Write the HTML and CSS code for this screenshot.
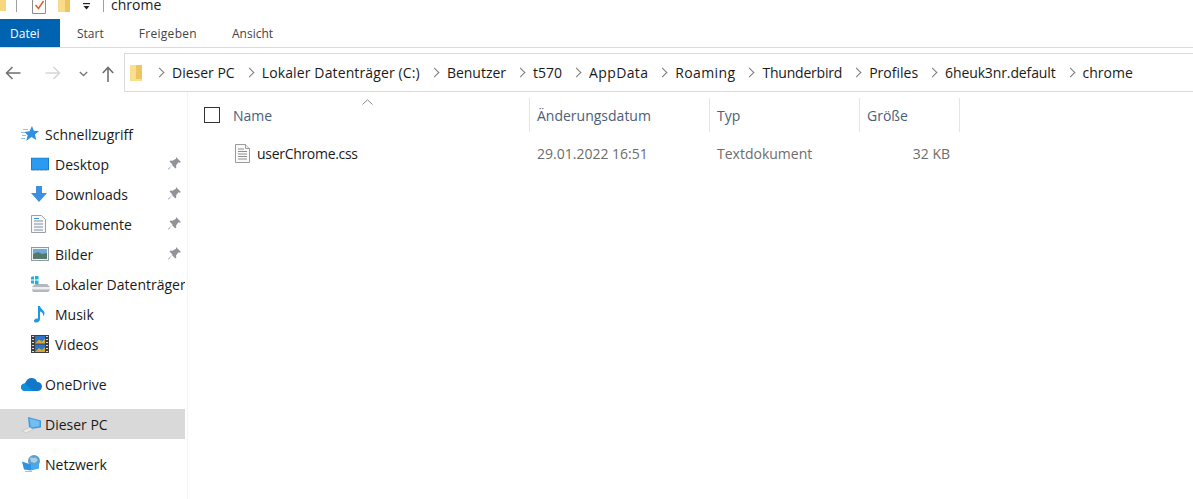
FILE: index.html
```html
<!DOCTYPE html>
<html lang="de">
<head>
<meta charset="utf-8">
<title>chrome</title>
<link rel="stylesheet" href="styles.css">
</head>
<body>
<div class="titlebar">
  <svg class="qa-folder-cut" width="6" height="11" viewBox="0 0 6 11"><rect width="6" height="11" fill="#f6d77e"/></svg>
  <span class="qa-sep"></span>
  <svg class="qa-check" width="15" height="15" viewBox="0 0 15 15"><path d="M.5 0v13.500h13V0" fill="#fff" stroke="#8d8d8d"/><path d="M3.500 5l3 3.500L11.500 1" fill="none" stroke="#d9622b" stroke-width="1.500"/></svg>
  <svg class="qa-folder" width="12" height="12" viewBox="0 0 12 12"><rect width="12" height="12" fill="#f8dc8a"/><rect x="7" width="5" height="12" fill="#eec45e"/></svg>
  <svg class="qa-drop" width="9" height="8" viewBox="0 0 9 8"><rect x="1" y="0" width="7" height="1.200" fill="#222"/><path d="M1.500 3h6L4.500 6.500z" fill="#222"/></svg>
  <span class="qa-sep qa-sep-b"></span>
  <span class="title">chrome</span>
</div>
<nav class="ribbon">
  <span class="tab tab-file">Datei</span>
  <span class="tab tab-start">Start</span>
  <span class="tab tab-share">Freigeben</span>
  <span class="tab tab-view">Ansicht</span>
</nav>
<div class="addressrow">
  <svg class="nav-back" width="16" height="14" viewBox="0 0 16 14"><path d="M15.500 7H1.500M7.500 1l-6 6 6 6" fill="none" stroke="#6f6f6f" stroke-width="1.500"/></svg>
  <svg class="nav-forward" width="16" height="14" viewBox="0 0 16 14"><path d="M.5 7h14M8.500 1l6 6-6 6" fill="none" stroke="#d6d6d6" stroke-width="1.500"/></svg>
  <svg class="nav-recent" width="9" height="6" viewBox="0 0 9 6"><path d="M.8 1l3.700 3.500L8.200 1" fill="none" stroke="#7c7c7c" stroke-width="1.500"/></svg>
  <svg class="nav-up" width="12" height="16" viewBox="0 0 12 16"><path d="M6 16V2M.8 7L6 1.500 11.200 7" fill="none" stroke="#6f6f6f" stroke-width="1.600"/></svg>
  <div class="addressbox">
    <svg class="crumb-folder" width="12" height="16" viewBox="0 0 12 16"><rect width="12" height="16" fill="#f9df90"/><rect x="6" width="6" height="14" fill="#eec560"/></svg>
    <ol class="crumbs">
      <li class="crumb">Dieser PC</li>
      <li class="crumb crumb-slight">Lokaler Datenträger (C:)</li>
      <li class="crumb">Benutzer</li>
      <li class="crumb">t570</li>
      <li class="crumb crumb-wide">AppData</li>
      <li class="crumb crumb-wide">Roaming</li>
      <li class="crumb crumb-narrow">Thunderbird</li>
      <li class="crumb">Profiles</li>
      <li class="crumb crumb-tight">6heuk3nr.default</li>
      <li class="crumb">chrome</li>
    </ol>
  </div>
</div>
<div class="main">
  <aside class="sidebar">
    <ul class="group">
      <li class="item top">
        <svg class="ico" width="18" height="16" viewBox="0 0 18 16"><path d="M11 0l1.800 4.700 5.200.3-4 3.400 1.300 5.600L10.500 11 5.200 15l1.500-5.800L3.500 6l5-.8z" fill="#2f8fe0"/><path d="M0 6.500h4M1 9.500h4M0 12.500h4M2 3.500h5" stroke="#8fc4ee"/></svg>
        <span>Schnellzugriff</span>
      </li>
      <li class="item child">
        <svg class="ico" width="18" height="13" viewBox="0 0 18 13"><rect x=".5" y=".5" width="17" height="12" fill="#2a9bf0" stroke="#1c7cc8"/><path d="M1 12.500h16" stroke="#5f7383" stroke-dasharray="3 1"/></svg>
        <span class="label">Desktop</span>
        <svg class="pin" width="13" height="13" viewBox="0 0 13 13"><path d="M8 0l5 5-1.500.8-1-.5L8 8.500l.3 2-1 1L4 8 .8 12.500 0 12l4.500-4.500-3-3 1-1 2 .3L8 1.800z" fill="#8e9499"/></svg>
      </li>
      <li class="item child">
        <svg class="ico" width="16" height="16" viewBox="0 0 16 16"><path d="M5 0h6v7h5l-8 9-8-9h5z" fill="#3d8fe0"/></svg>
        <span class="label">Downloads</span>
        <svg class="pin" width="13" height="13" viewBox="0 0 13 13"><path d="M8 0l5 5-1.500.8-1-.5L8 8.500l.3 2-1 1L4 8 .8 12.500 0 12l4.500-4.500-3-3 1-1 2 .3L8 1.800z" fill="#8e9499"/></svg>
      </li>
      <li class="item child">
        <svg class="ico" width="15" height="18" viewBox="0 0 15 18"><path d="M.5.500h10l4 4v13H.5z" fill="#f8f8f8" stroke="#9aa0a6"/><path d="M3 6h9M3 9h9M3 12h9M3 15h9" stroke="#7e8f9e"/><path d="M3 3.500h5" stroke="#3d8fe0"/></svg>
        <span class="label">Dokumente</span>
        <svg class="pin" width="13" height="13" viewBox="0 0 13 13"><path d="M8 0l5 5-1.500.8-1-.5L8 8.500l.3 2-1 1L4 8 .8 12.500 0 12l4.500-4.500-3-3 1-1 2 .3L8 1.800z" fill="#8e9499"/></svg>
      </li>
      <li class="item child">
        <svg class="ico" width="18" height="14" viewBox="0 0 18 14"><rect x=".5" y=".5" width="17" height="13" fill="#eef3f7" stroke="#8d9aa5"/><rect x="2" y="2" width="14" height="5" fill="#6fa9d8"/><path d="M2 7l5-2 4 2 5-1v6H2z" fill="#56786a"/></svg>
        <span class="label">Bilder</span>
        <svg class="pin" width="13" height="13" viewBox="0 0 13 13"><path d="M8 0l5 5-1.500.8-1-.5L8 8.500l.3 2-1 1L4 8 .8 12.500 0 12l4.500-4.500-3-3 1-1 2 .3L8 1.800z" fill="#8e9499"/></svg>
      </li>
      <li class="item child">
        <svg class="ico" width="19" height="16" viewBox="0 0 19 16"><path d="M1 11l3-3h12l3 3v3l-2 2H2l-1-2z" fill="#b4b8bc"/><path d="M1 11h18v2.500H1z" fill="#eceeef"/><path d="M0 1l3-.7v3.200H0zM4 .100L7.500 0v3.500H4zM0 4.500h3v3.200l-3-.5zM4 4.500h3.500v4L4 8z" fill="#16b4dc"/></svg>
        <span class="label">Lokaler Datenträger (C:)</span>
      </li>
      <li class="item child">
        <svg class="ico" width="18" height="18" viewBox="0 0 18 18"><path d="M7 1h2c.5 3 3.500 3.500 4.500 6.500 0 1.500-.5 3-1.500 3.500.5-2.500-1-4-3-4.500V14c0 2.500-2 3.500-4 3.500-1.500 0-2-1-2-1.800 0-1.500 1.800-2.700 4-2.200z" fill="#1a9ae0"/></svg>
        <span class="label">Musik</span>
      </li>
      <li class="item child">
        <svg class="ico" width="18" height="18" viewBox="0 0 18 18"><rect width="18" height="18" fill="#3b3f44"/><rect x="4" y="1" width="10" height="7.500" fill="#2f74c8"/><rect x="4" y="9.500" width="10" height="7.500" fill="#2f74c8"/><path d="M4 8.500l4-4 3 2 3-3v5zM4 17l4-4 3 2 3-3v5z" fill="#d9a62c"/><path d="M1 1.500h2M1 4.500h2M1 7.500h2M1 10.500h2M1 13.500h2M1 16.500h2M15 1.500h2M15 4.500h2M15 7.500h2M15 10.500h2M15 13.500h2M15 16.500h2" stroke="#d8dadc"/></svg>
        <span class="label">Videos</span>
      </li>
    </ul>
    <ul class="group">
      <li class="item top">
        <svg class="ico" width="21" height="14" viewBox="0 0 21 14"><path d="M4 14C1.500 14 0 12.300 0 10.300 0 8 1.800 6.500 4 6.500 5 3 7.500 1 10.500 1c2.800 0 4.800 1.500 5.700 4 2.800 0 4.800 2 4.800 4.500S19 14 16.500 14z" fill="#1478c8"/><path d="M4 14C1.500 14 0 12.300 0 10.300 0 8 1.800 6.500 4 6.500L12 14z" fill="#0f90dc"/></svg>
        <span>OneDrive</span>
      </li>
    </ul>
    <ul class="group">
      <li class="item top selected">
        <svg class="ico" width="20" height="18" viewBox="0 0 20 18"><path d="M7 2l13 3.500v7L10 14 8 12z" fill="#3d9ae2"/><path d="M8.500 3.500l10 2.700v5l-8 1.200-1-1.700z" fill="#74bdf0"/><path d="M1 15.500l8-3 3 2-7 3.500z" fill="#e9e9e9" stroke="#bdbdbd" stroke-width=".6"/></svg>
        <span>Dieser PC</span>
      </li>
    </ul>
    <ul class="group">
      <li class="item top">
        <svg class="ico" width="20" height="18" viewBox="0 0 20 18"><circle cx="13" cy="6" r="6" fill="#5d9fd0"/><path d="M9 2.500c2.500 0 3.500 1 5.500 0L17 5l-3 3-4-1z" fill="#a5d0ea"/><path d="M1 6.500l9 3v6l-7-1z" fill="#2f93e0"/><path d="M10 9.500l8-1v5l-8 2z" fill="#4aa8ee"/><path d="M4 16h7v1H4z" fill="#b7bcc1"/></svg>
        <span>Netzwerk</span>
      </li>
    </ul>
  </aside>
  <section class="files">
    <svg class="sort" width="11" height="6" viewBox="0 0 11 6"><path d="M.5 5.500L5.500.8l5 4.700" fill="none" stroke="#8b8b8b"/></svg>
    <div class="row header">
      <div class="cell cell-name"><span class="check"></span><span>Name</span></div>
      <div class="cell sep">Änderungsdatum</div>
      <div class="cell sep">Typ</div>
      <div class="cell sep sep-end">Größe</div>
    </div>
    <div class="row file">
      <div class="cell cell-file">
        <svg width="15" height="19" viewBox="0 0 15 19"><path d="M.5.500h10l4 4v14H.5z" fill="#fafafa" stroke="#9b9b9b"/><path d="M10.500.500v4h4" fill="#eee" stroke="#9b9b9b"/><path d="M3 5h6M3 7.500h9M3 10h9M3 12.500h9M3 15h9" stroke="#8e8e8e"/></svg>
        <span class="filename">userChrome.css</span>
      </div>
      <div class="cell meta">29.01.2022 16:51</div>
      <div class="cell meta">Textdokument</div>
      <div class="cell meta size">32 KB</div>
    </div>
  </section>
</div>
</body>
</html>
```
FILE: styles.css
```css
* { box-sizing: border-box; }
html, body { margin: 0; padding: 0; }
body {
  width: 1193px;
  height: 499px;
  overflow: hidden;
  background: #fff;
  font-family: "Open Sans", "Noto Sans", sans-serif;
  font-size: 14px;
  color: #1a1a1a;
}
svg { display: block; flex: none; }
ul, ol { list-style: none; margin: 0; padding: 0; }

.titlebar { height: 19px; display: flex; align-items: flex-start; overflow: hidden; }
.qa-sep { width: 1px; height: 12px; background: #a0a0a0; margin-left: 10px; }
.qa-check { margin-left: 15px; }
.qa-folder { margin-left: 11px; }
.qa-drop { margin: 3px 0 0 12px; }
.qa-sep-b { margin-left: 12px; }
.title { margin-left: 7px; line-height: 10px; font-size: 14px; }

.ribbon { height: 29px; display: flex; align-items: stretch; border-bottom: 1px solid #dadbdc; font-size: 12px; color: #444; }
.tab { display: flex; align-items: center; }
.tab-file { width: 60px; padding-left: 10px; background: #0063b1; color: #fff; }
.tab-start { margin-left: 17px; }
.tab-share { margin-left: 35px; letter-spacing: .3px; }
.tab-view { margin-left: 35px; }

.addressrow { height: 44px; padding-top: 5px; display: flex; align-items: flex-start; }
.nav-back { margin: 13px 0 0 5px; }
.nav-forward { margin: 13px 0 0 24px; }
.nav-recent { margin: 18px 0 0 18px; }
.nav-up { margin: 13px 0 0 14px; }
.addressbox { margin-left: 10px; flex: 1; height: 39px; border: 1px solid #d9d9d9; border-right: 0; display: flex; align-items: center; padding-left: 5px; }
.crumb-folder { margin-right: 3px; }
.crumbs { display: flex; }
.crumb { display: flex; align-items: center; white-space: nowrap; }
.crumb::before { content: ""; width: 6px; height: 6px; margin: 0 9px 0 11px; border-top: 1.500px solid #7a7a7a; border-right: 1.500px solid #7a7a7a; transform: rotate(45deg); }
.crumb-slight { letter-spacing: .13px; }
.crumb-wide { letter-spacing: .36px; }
.crumb-tight { letter-spacing: -.12px; }
.crumb-narrow { letter-spacing: -.2px; }

.main { display: flex; height: 407px; }
.sidebar { width: 188px; flex: none; padding-top: 27px; border-right: 1px solid #f4f4f4; }
.group { margin-bottom: 10px; }
.item { height: 30px; width: 185px; overflow: hidden; display: flex; align-items: center; white-space: nowrap; position: relative; }
.item.top { padding-left: 45px; }
.item.child { padding-left: 55px; }
.item .ico { position: absolute; left: 31px; top: 50%; transform: translateY(-50%); }
.item.top .ico { left: 21px; }
.label { flex: none; }
.pin { position: absolute; left: 168px; top: 8px; }
.selected { background: #d9d9d9; }

.files { flex: 1; position: relative; }
.sort { position: absolute; left: 174px; top: 7px; }
.row { display: grid; grid-template-columns: 341px 180px 150px 101px; }
.header { height: 34px; margin-top: 6px; color: #4c607a; }
.cell { display: flex; align-items: center; padding-left: 8px; white-space: nowrap; }
.cell-name { padding-left: 16px; gap: 13px; }
.check { width: 16px; height: 16px; border: 1px solid #333; }
.sep { border-left: 1px solid #e5e5e5; padding-left: 7px; }
.sep-end { border-right: 1px solid #e5e5e5; }
.file { height: 30px; margin-top: 6px; }
.cell-file { padding-left: 47px; gap: 7px; }
.filename { letter-spacing: -.3px; }
.meta { color: #6d6d6d; }
.size { justify-content: flex-end; padding-right: 10px; }
```
